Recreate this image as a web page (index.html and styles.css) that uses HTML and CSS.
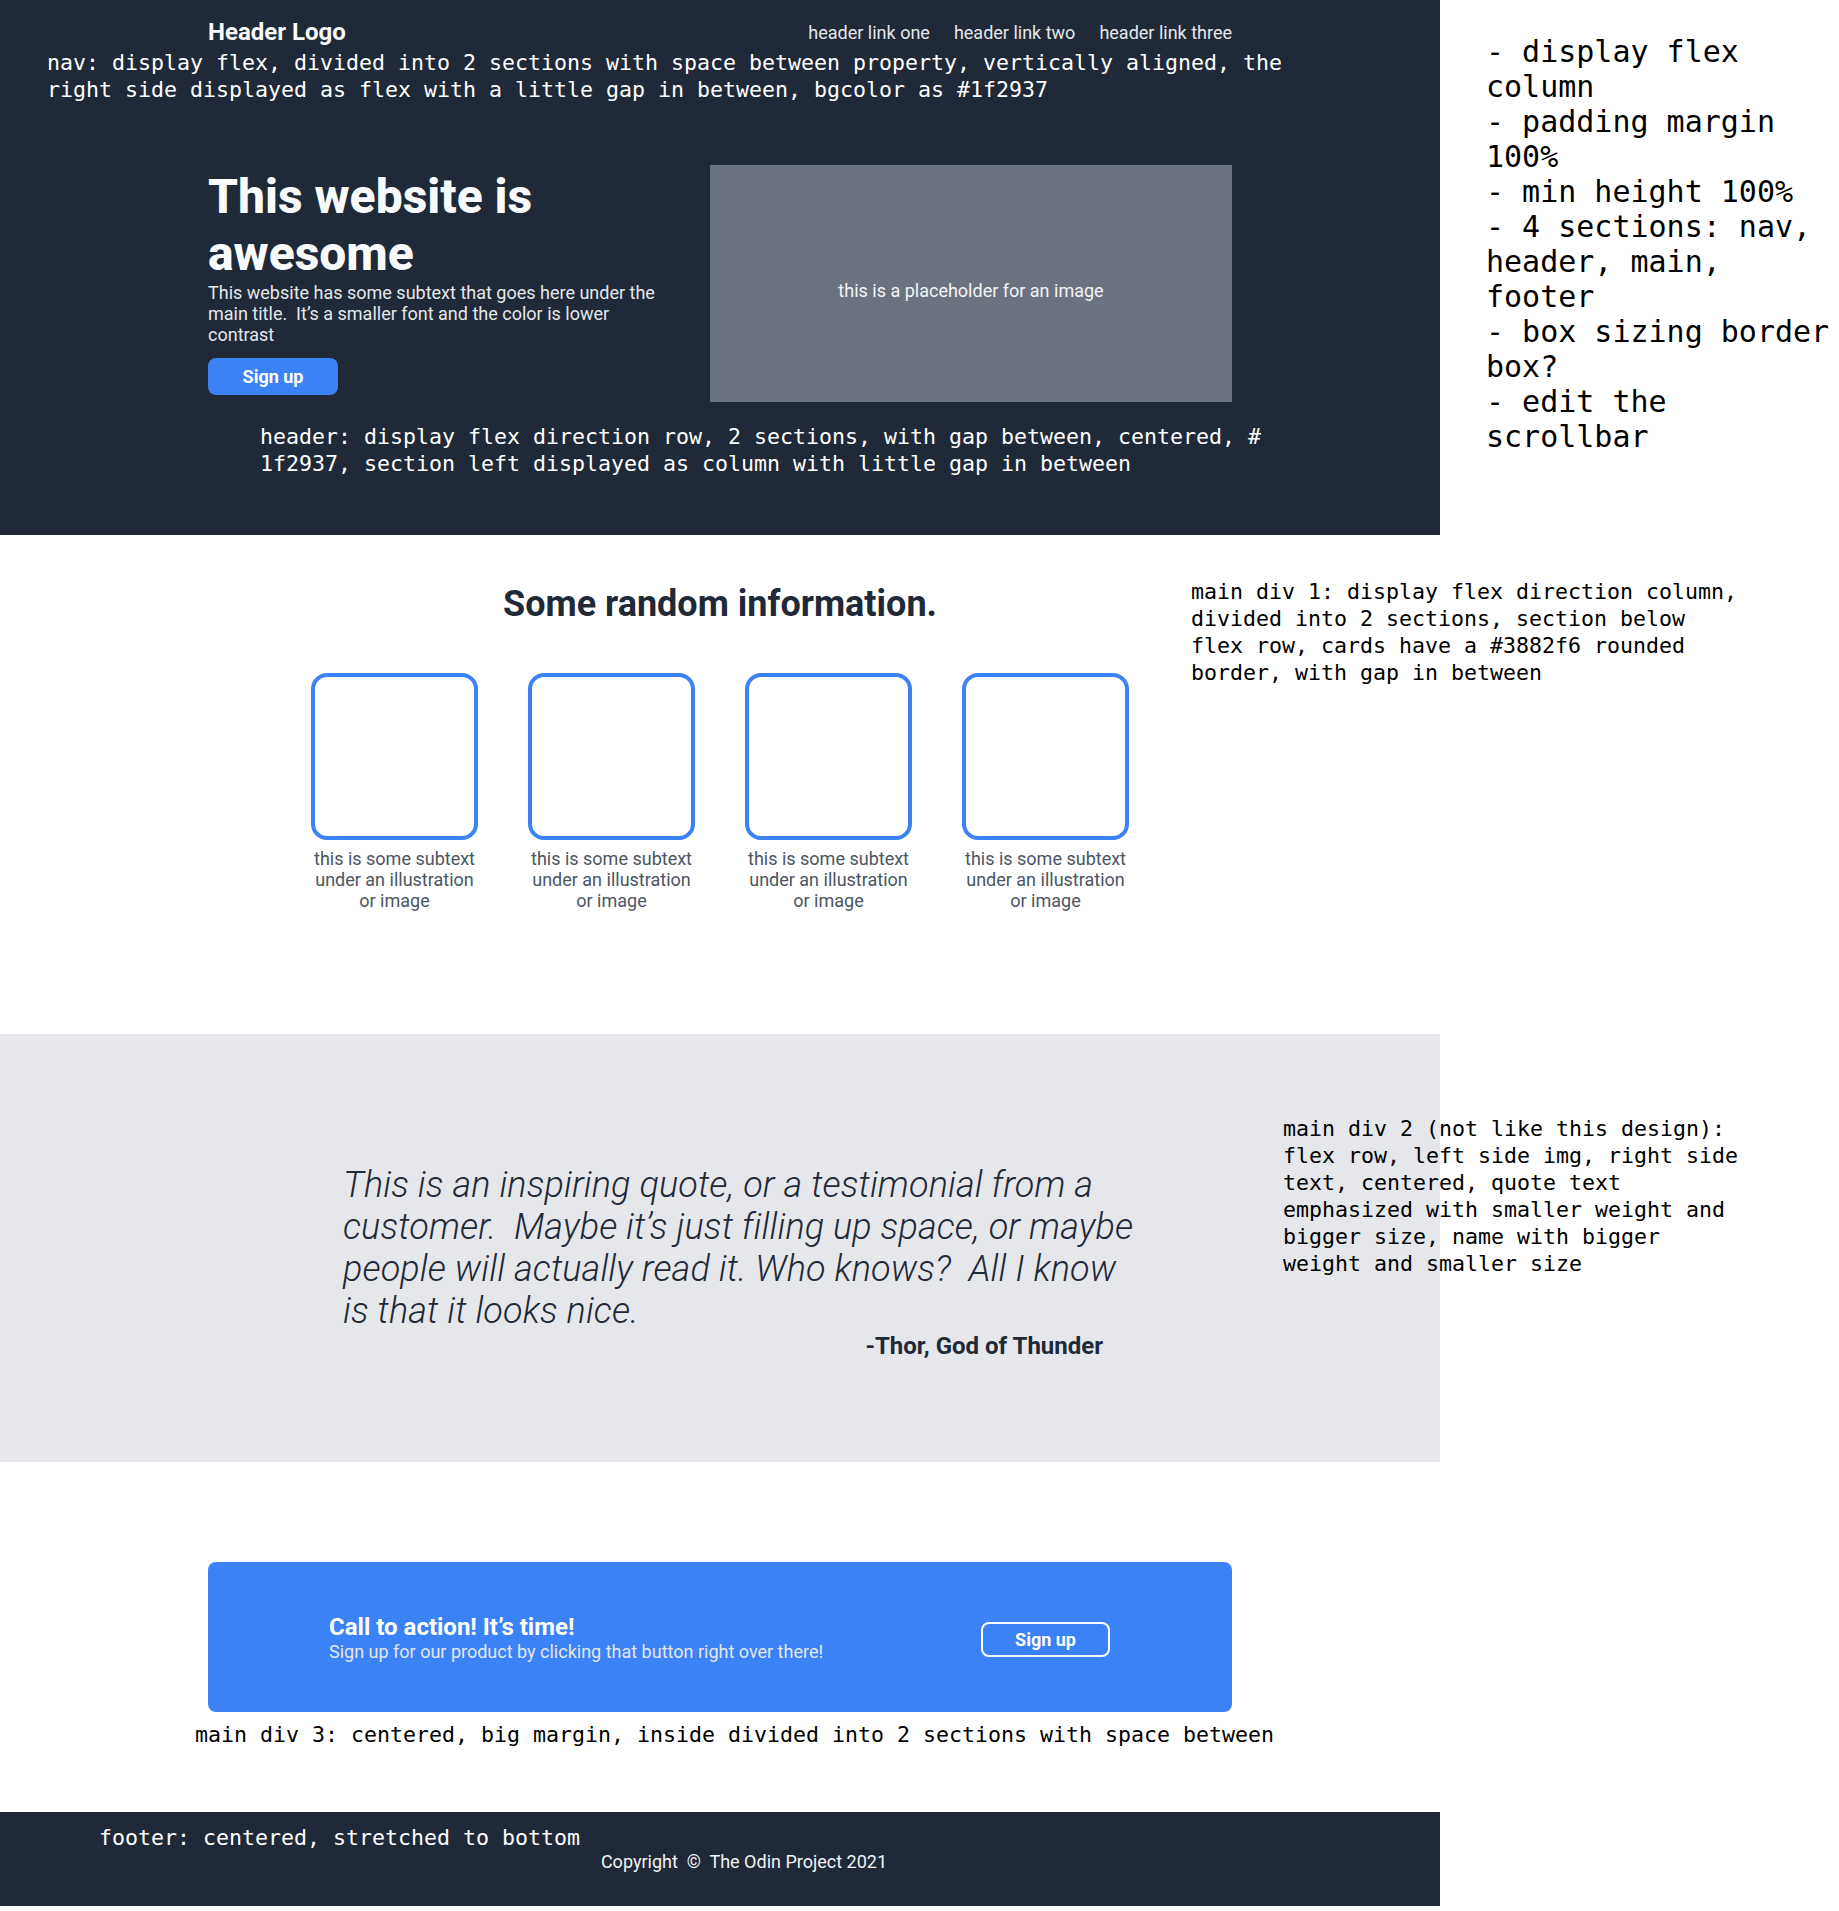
FILE: index.html
```html
<!DOCTYPE html>
<html lang="en">
<head>
<meta charset="utf-8">
<title>Landing page</title>
<link rel="stylesheet" href="styles.css">
</head>
<body>
<div class="page">
  <div class="design">
    <div class="top">
      <nav class="nav">
        <div class="nav-inner">
          <div class="logo">Header Logo</div>
          <ul class="links">
            <li>header link one</li>
            <li>header link two</li>
            <li>header link three</li>
          </ul>
        </div>
        <p class="note note-light note-nav">nav: display flex, divided into 2 sections with space between property, vertically aligned, the
right side displayed as flex with a little gap in between, bgcolor as #1f2937</p>
      </nav>
      <header class="hero">
        <div class="hero-inner">
          <div class="hero-text">
            <h1>This website is awesome</h1>
            <p>This website has some subtext that goes here under the main title.&nbsp; It’s a smaller font and the color is lower contrast</p>
            <button class="btn-primary" type="button">Sign up</button>
          </div>
          <div class="hero-image">this is a placeholder for an image</div>
        </div>
        <p class="note note-light note-header">header: display flex direction row, 2 sections, with gap between, centered, #
1f2937, section left displayed as column with little gap in between</p>
      </header>
    </div>
    <main>
      <section class="info">
        <h2>Some random information.</h2>
        <div class="cards">
          <div class="card"><div class="card-box"></div><p>this is some subtext<br>under an illustration<br>or image</p></div>
          <div class="card"><div class="card-box"></div><p>this is some subtext<br>under an illustration<br>or image</p></div>
          <div class="card"><div class="card-box"></div><p>this is some subtext<br>under an illustration<br>or image</p></div>
          <div class="card"><div class="card-box"></div><p>this is some subtext<br>under an illustration<br>or image</p></div>
        </div>
        <p class="note note-info">main div 1: display flex direction column,
divided into 2 sections, section below
flex row, cards have a #3882f6 rounded
border, with gap in between</p>
      </section>
      <section class="quote">
        <div class="quote-inner">
          <blockquote>This is an inspiring quote, or a testimonial from a<br>customer.&nbsp; Maybe it’s just filling up space, or maybe<br>people will actually read it. Who knows?&nbsp; All I know<br>is that it looks nice.</blockquote>
          <p class="author">-Thor, God of Thunder</p>
        </div>
        <p class="note note-quote">main div 2 (not like this design):
flex row, left side img, right side
text, centered, quote text
emphasized with smaller weight and
bigger size, name with bigger
weight and smaller size</p>
      </section>
      <section class="cta-section">
        <div class="cta">
          <div class="cta-text">
            <h3>Call to action! It’s time!</h3>
            <p>Sign up for our product by clicking that button right over there!</p>
          </div>
          <button class="btn-outline" type="button">Sign up</button>
        </div>
        <p class="note note-cta">main div 3: centered, big margin, inside divided into 2 sections with space between</p>
      </section>
    </main>
    <footer class="footer">
      <p class="note note-light note-footer">footer: centered, stretched to bottom</p>
      <p class="copyright">Copyright&nbsp; ©&nbsp; The Odin Project 2021</p>
    </footer>
  </div>
  <aside class="side-notes">- display flex
column
- padding margin
100%
- min height 100%
- 4 sections: nav,
header, main,
footer
- box sizing border
box?
- edit the
scrollbar</aside>
</div>
</body>
</html>
```

FILE: styles.css
```css
* {
  box-sizing: border-box;
  margin: 0;
  padding: 0;
}

body {
  margin: 0;
  background: #ffffff;
  font-family: Roboto, "Liberation Sans", sans-serif;
}

.page {
  display: flex;
  align-items: flex-start;
  width: 1839px;
}

.design {
  width: 1440px;
  flex: none;
}

.side-notes {
  flex: 1;
  padding: 34px 0 0 46px;
  font-family: "DejaVu Sans Mono", monospace;
  font-size: 30px;
  line-height: 35px;
  white-space: pre;
  color: #000000;
}

.note {
  font-family: "DejaVu Sans Mono", monospace;
  font-size: 21.6px;
  line-height: 27px;
  white-space: pre;
  color: #000000;
}

.note-light {
  color: #ffffff;
}

/* top dark block */
.top {
  background: #1f2937;
  padding: 18px 0 58px;
}

.nav-inner {
  width: 1024px;
  margin: 0 auto;
  display: flex;
  justify-content: space-between;
  align-items: center;
}

.logo {
  font-size: 24px;
  font-weight: 700;
  color: #f9fafb;
}

.links {
  display: flex;
  gap: 24px;
  list-style: none;
  font-size: 18px;
  color: #e5e7eb;
}

.note-nav {
  margin: 3px 0 0 47px;
}

.hero-inner {
  width: 1024px;
  margin: 62px auto 0;
  display: flex;
  justify-content: space-between;
  align-items: flex-start;
}

.hero-text {
  width: 456px;
  margin-top: 3px;
  display: flex;
  flex-direction: column;
  align-items: flex-start;
}

.hero-text h1 {
  font-size: 48px;
  font-weight: 800;
  color: #f9fafb;
}

.hero-text p {
  font-size: 18px;
  color: #e5e7eb;
}

.btn-primary {
  margin-top: 13px;
  width: 130px;
  height: 37px;
  background: #3b82f6;
  color: #ffffff;
  border: none;
  border-radius: 8px;
  font-family: Roboto, "Liberation Sans", sans-serif;
  font-size: 18px;
  font-weight: 700;
}

.hero-image {
  width: 522px;
  height: 237px;
  background: #6b7280;
  display: flex;
  align-items: center;
  justify-content: center;
  padding-top: 14px;
  color: #f3f4f6;
  font-size: 18px;
}

.note-header {
  margin: 20.5px 0 0 260px;
}

/* info cards */
.info {
  position: relative;
  padding: 48px 0 123px;
}

.info h2 {
  text-align: center;
  font-size: 36px;
  font-weight: 700;
  color: #1f2937;
}

.cards {
  display: flex;
  justify-content: center;
  gap: 50px;
  margin-top: 48px;
}

.card {
  width: 167px;
  display: flex;
  flex-direction: column;
  align-items: center;
  gap: 8px;
}

.card-box {
  width: 167px;
  height: 167px;
  border: 4px solid #3b82f6;
  border-radius: 16px;
}

.card p {
  font-size: 18px;
  color: #4b5563;
  text-align: center;
  white-space: nowrap;
}

.note-info {
  position: absolute;
  left: 1191px;
  top: 43px;
}

/* quote */
.quote {
  position: relative;
  background: #e5e7eb;
  padding: 130.5px 0 102px;
}

.quote-inner {
  width: 797px;
  margin-left: 343px;
}

.quote-inner blockquote {
  font-size: 36px;
  font-style: italic;
  font-weight: 300;
  letter-spacing: 0.12px;
  color: #1f2937;
  white-space: nowrap;
}

.author {
  text-align: right;
  padding-right: 37px;
  font-size: 24px;
  font-weight: 700;
  color: #1f2937;
}

.note-quote {
  position: absolute;
  left: 1283px;
  top: 81.5px;
}

/* call to action */
.cta-section {
  padding: 100px 0 64px;
}

.cta {
  width: 1024px;
  height: 150px;
  margin: 0 auto;
  background: #3b82f6;
  border-radius: 8px;
  display: flex;
  justify-content: space-between;
  align-items: center;
  padding: 0 122px 0 121px;
}

.cta-text h3 {
  font-size: 24px;
  font-weight: 700;
  color: #ffffff;
}

.cta-text p {
  font-size: 18px;
  color: #e5e7eb;
}

.btn-outline {
  margin-top: 5px;
  width: 129px;
  height: 35px;
  border: 2px solid #ffffff;
  border-radius: 8px;
  background: transparent;
  color: #ffffff;
  font-family: Roboto, "Liberation Sans", sans-serif;
  font-size: 18px;
  font-weight: 700;
}

.note-cta {
  margin: 9px 0 0 195px;
}

/* footer */
.footer {
  background: #1f2937;
  padding: 12px 0 34px;
}

.note-footer {
  margin-left: 99px;
}

.copyright {
  text-align: center;
  padding-left: 48px;
  font-size: 18px;
  color: #f3f4f6;
}
```
